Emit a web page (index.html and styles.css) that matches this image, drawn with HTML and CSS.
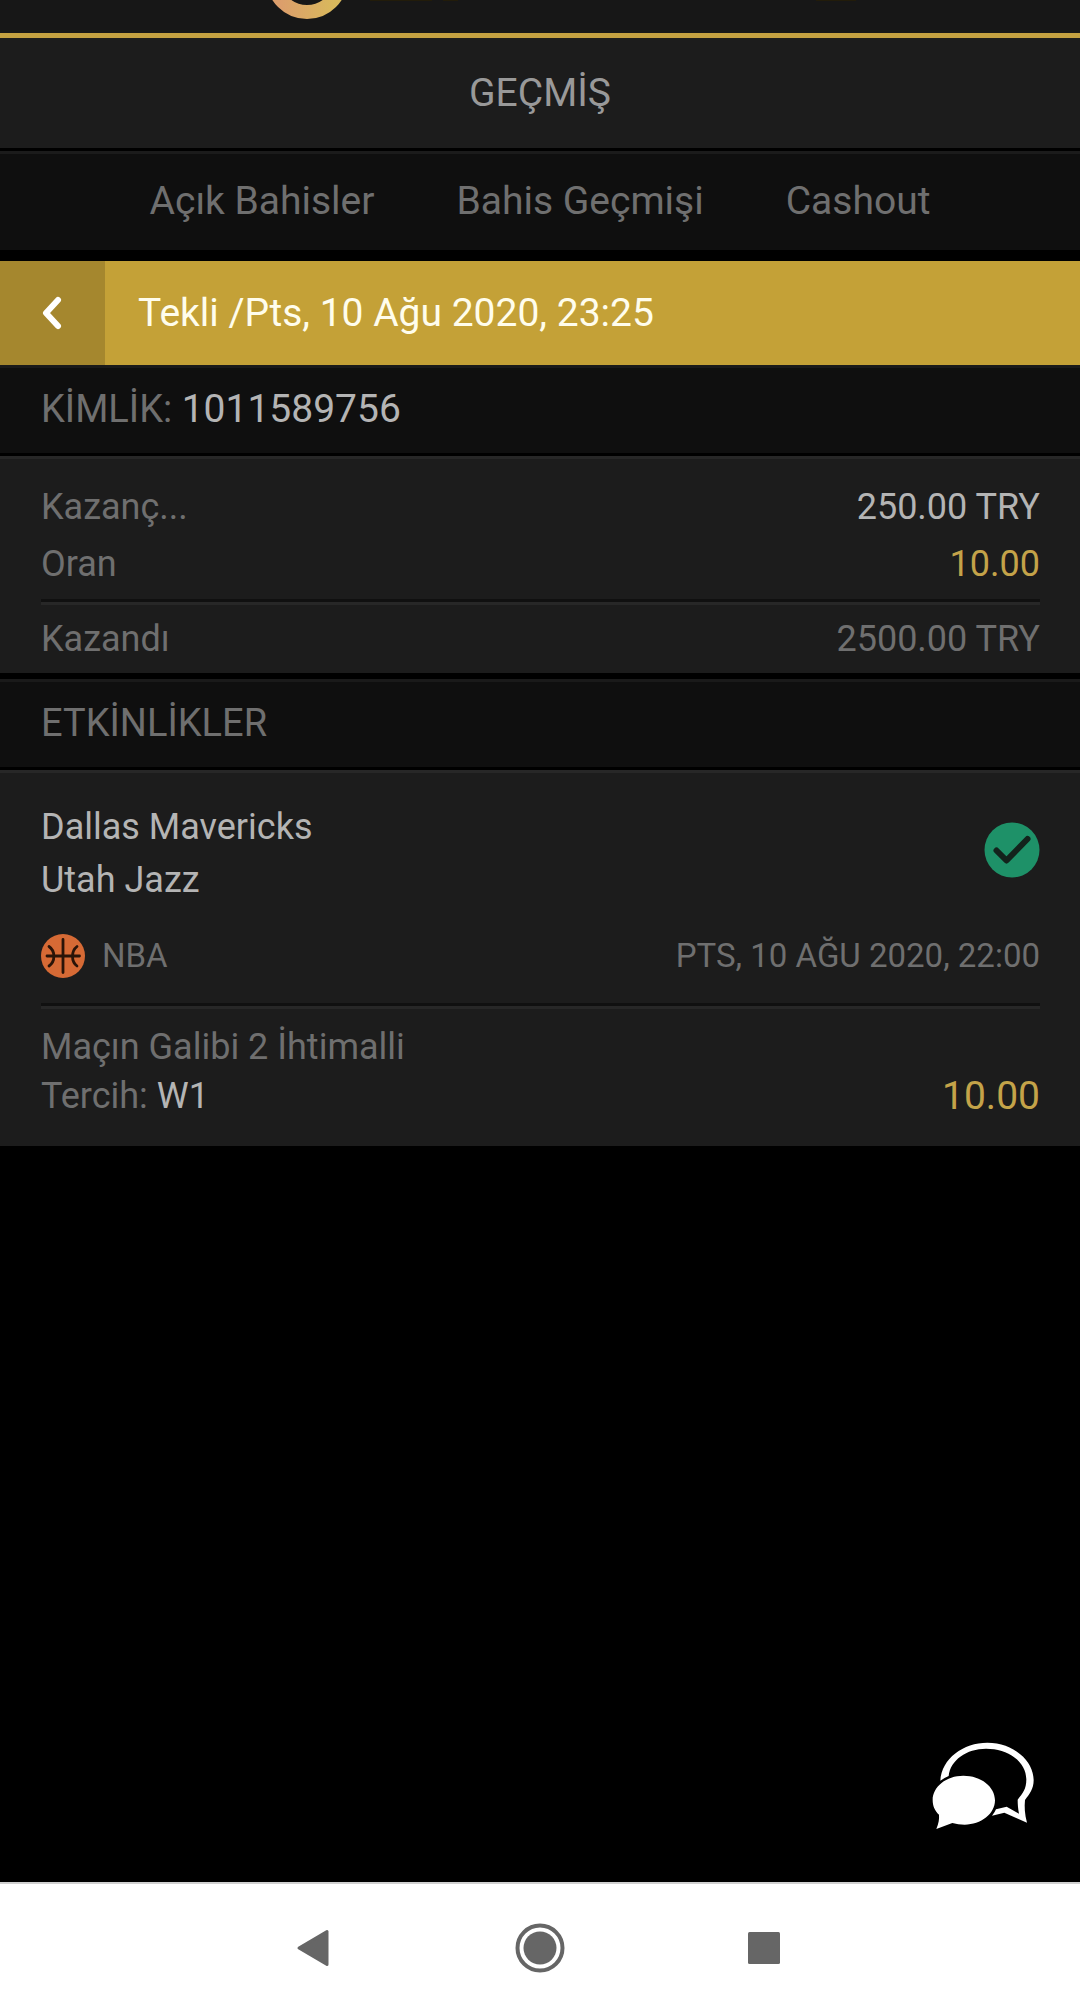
FILE: index.html
```html
<!DOCTYPE html>
<html lang="tr">
<head>
<meta charset="utf-8">
<meta name="viewport" content="width=device-width, initial-scale=1">
<title>Geçmiş</title>
<link rel="stylesheet" href="styles.css">
</head>
<body>
<div class="app">
  <header class="topbar">
    <svg class="logo" viewBox="220 0 640 33" aria-hidden="true">
      <defs>
        <linearGradient id="ring" x1="0" x2="1" y1="0" y2="0">
          <stop offset="0.1" stop-color="#dc9e6c"/>
          <stop offset="0.9" stop-color="#d9b95c"/>
        </linearGradient>
      </defs>
      <circle cx="307" cy="-22" r="34" fill="none" stroke="url(#ring)" stroke-width="14"/>
      <path d="M370 0h62v1h-62zM443 0h15v1h-15zM816 0h40v1h-40z" fill="#221c0a"/>
    </svg>
  </header>

  <main class="content">
    <h1 class="page-title">GEÇMİŞ</h1>
    <nav class="tabs" aria-label="Bahisler">
      <a class="tab" href="#open">Açık Bahisler</a>
      <a class="tab" href="#history">Bahis Geçmişi</a>
      <a class="tab" href="#cashout">Cashout</a>
    </nav>

    <div class="bet-head">
      <button class="back" type="button" aria-label="Geri">
        <svg width="24" height="36" viewBox="0 0 24 36" aria-hidden="true">
          <path d="M17 5L5 18L17 31" fill="none" stroke="#fff" stroke-width="6" stroke-linecap="round" stroke-linejoin="round"/>
        </svg>
      </button>
      <h2 class="bet-title">Tekli /Pts, 10 Ağu 2020, 23:25</h2>
    </div>

    <div class="bar">KİMLİK: <span class="bet-id bright">1011589756</span></div>

    <dl class="panel summary">
      <div class="row"><dt>Kazanç...</dt><dd class="bright">250.00 TRY</dd></div>
      <div class="row"><dt>Oran</dt><dd class="gold">10.00</dd></div>
      <div class="row total"><dt>Kazandı</dt><dd>2500.00 TRY</dd></div>
    </dl>

    <h2 class="bar bar-spaced">ETKİNLİKLER</h2>

    <section class="panel event">
      <div class="match">
        <div class="teams bright">
          <div>Dallas Mavericks</div>
          <div>Utah Jazz</div>
        </div>
        <svg class="status" width="56" height="56" viewBox="0 0 56 56" role="img" aria-label="Kazandı">
          <circle cx="28" cy="28" r="27.500" fill="#1e9168"/>
          <path d="M12.500 28.500L22.500 38.500L43.500 17" fill="none" stroke="#13231c" stroke-width="6" stroke-linecap="round" stroke-linejoin="round"/>
        </svg>
      </div>
      <div class="league">
        <svg width="44" height="44" viewBox="0 0 44 44" aria-hidden="true">
          <circle cx="22" cy="22" r="22" fill="#d66a35"/>
          <path d="M22 5.500V38.500M6 22H38.500M8 12.500C14.500 17 14.500 27.500 8 32M36 12.500C30 17 30 27.500 36 32" fill="none" stroke="#2a1408" stroke-width="2.800" stroke-linecap="round"/>
        </svg>
        <span class="league-name">NBA</span>
        <time datetime="2020-08-10T22:00">PTS, 10 AĞU 2020, 22:00</time>
      </div>
      <div class="pick">
        <div>
          <div>Maçın Galibi 2 İhtimalli</div>
          <div>Tercih: <span class="bright">W1</span></div>
        </div>
        <div class="gold odds">10.00</div>
      </div>
    </section>
  </main>

  <nav class="system-nav" aria-label="Sistem">
    <button type="button" aria-label="Geri">
      <svg width="50" height="50" viewBox="0 0 50 50" aria-hidden="true"><path d="M36 8.500V41.500L8 25z" fill="#666" stroke="#666" stroke-width="3" stroke-linejoin="round"/></svg>
    </button>
    <button type="button" aria-label="Ana ekran">
      <svg width="50" height="50" viewBox="0 0 50 50" aria-hidden="true"><circle cx="25" cy="25" r="22.500" fill="none" stroke="#666" stroke-width="4"/><circle cx="25" cy="25" r="16.500" fill="#666"/></svg>
    </button>
    <button type="button" aria-label="Son uygulamalar">
      <svg width="50" height="50" viewBox="0 0 50 50" aria-hidden="true"><rect x="9" y="9" width="32" height="32" rx="1.500" fill="#666"/></svg>
    </button>
  </nav>

  <button class="chat" type="button" aria-label="Canlı destek">
    <svg width="108" height="92" viewBox="90 90 324 276" aria-hidden="true">
      <path d="M121 212C125 145 190 98 262 98C340 98 401 152 401 210C401 238 388 252 375 270C373 290 374 312 381 338L313 308L276 317Q284 308 288 298L320 290L357 311C354 296 353 282 353 269C368 250 379 238 379 208C379 155 325 116 258 116C200 116 151 150 146 198Q132 204 121 212Z" fill="#fff"/>
      <path d="M190 197C243 197 285 230 285 271C285 312 243 344 194 344Q174 344 157 339L109 357C116 340 118 328 117 314C104 302 98 288 98 270C98 230 139 197 190 197Z" fill="#fff"/>
    </svg>
  </button>
</div>
</body>
</html>
```
FILE: styles.css
```css
* {
  box-sizing: border-box;
}

body {
  margin: 0;
  background: #000;
  color: #6f6f6f;
  font-family: Roboto, "Liberation Sans", sans-serif;
  font-size: 36px;
}

h1,
h2,
dl,
dd {
  margin: 0;
  font-weight: 400;
}

button {
  display: flex;
  align-items: center;
  justify-content: center;
  border: 0;
  padding: 0;
  background: none;
}

svg {
  display: block;
}

.app {
  display: flex;
  flex-direction: column;
  min-height: 100vh;
}

.bright {
  color: #b4b4b4;
}

.gold {
  color: #c4a349;
}

.topbar {
  display: flex;
  justify-content: center;
  background: #171717;
}

.logo {
  width: 640px;
  height: 33px;
}

.content {
  flex: 1;
}

.page-title {
  border-top: 5px solid #c4a141;
  padding: 31px 40px 30px;
  background: #1c1c1c;
  color: #999;
  font-size: 39px;
  line-height: 49px;
  text-align: center;
}

.tabs {
  display: flex;
  justify-content: center;
  gap: 82px;
  margin: 3px 0 11px;
  border-top: 3px solid #1b1b1b;
  padding: 23px 40px 24px;
  background: #0f0f0f;
  font-size: 39px;
  line-height: 49px;
}

.tab {
  color: inherit;
  text-decoration: none;
}

.bet-head {
  display: flex;
  background: #c4a137;
}

.back {
  width: 105px;
  background: #a5872e;
}

.bet-title {
  flex: 1;
  padding: 28px 33px 27px;
  color: #fffdec;
  font-size: 39px;
  line-height: 49px;
}

.bar {
  border-top: 3px solid #1a1a1a;
  padding: 17px 41px 19px;
  background: #0f0f0f;
  font-size: 38px;
  line-height: 49px;
}

.bet-id {
  font-size: 39px;
}

.bar-spaced {
  margin-top: 6px;
}

.panel {
  border-top: 3px solid #272727;
  padding: 0 40px 0 41px;
  background: #1c1c1c;
}

.bar + .panel {
  margin-top: 3px;
}

.summary {
  padding-top: 20px;
}

.row {
  display: flex;
  justify-content: space-between;
  line-height: 57px;
}

.total {
  margin-top: 6px;
  border-top: 3px solid #101010;
  box-shadow: inset 0 3px #272727;
  padding: 9px 0 5px;
}

.match {
  display: flex;
  align-items: center;
  justify-content: space-between;
  padding-top: 28px;
  line-height: 53px;
}

.status {
  margin-bottom: 8px;
}

.league {
  display: flex;
  align-items: center;
  padding: 27px 0 25px;
  font-size: 33px;
  line-height: 44px;
}

.league-name {
  flex: 1;
  padding-left: 17px;
}

.pick {
  display: flex;
  align-items: flex-end;
  justify-content: space-between;
  border-top: 3px solid #101010;
  box-shadow: inset 0 3px #272727;
  padding: 17px 0 25px;
  line-height: 49px;
}

.odds {
  font-size: 39px;
}

.system-nav {
  display: flex;
  justify-content: center;
  gap: 174px;
  border-top: 2px solid #d0d0d0;
  padding: 39px 0;
  background: #fff;
}

.chat {
  position: fixed;
  right: 42px;
  bottom: 180px;
}
```
